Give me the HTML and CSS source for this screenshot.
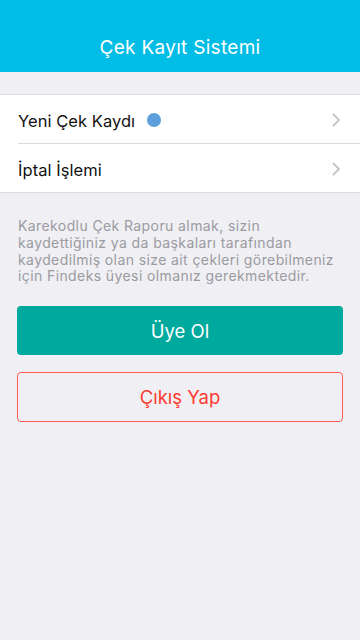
FILE: index.html
```html
<!DOCTYPE html>
<html lang="tr">
<head>
<meta charset="utf-8">
<title>Çek Kayıt Sistemi</title>
<link rel="stylesheet" href="styles.css">
</head>
<body>
<header class="navbar">
  <h1 class="navbar-title">Çek Kayıt Sistemi</h1>
</header>
<main class="content">
  <ul class="menu">
    <li class="menu-row">
      <span class="menu-label">Yeni Çek Kaydı</span>
      <span class="badge-dot"></span>
      <svg class="chevron" viewBox="0 0 9 14" width="9" height="14"><path d="M1.5 1.5 L7 7 L1.5 12.5" fill="none" stroke="#c7c7cc" stroke-width="2" stroke-linecap="round" stroke-linejoin="round"/></svg>
    </li>
    <li class="menu-row">
      <span class="menu-label">İptal İşlemi</span>
      <svg class="chevron" viewBox="0 0 9 14" width="9" height="14"><path d="M1.5 1.5 L7 7 L1.5 12.5" fill="none" stroke="#c7c7cc" stroke-width="2" stroke-linecap="round" stroke-linejoin="round"/></svg>
    </li>
  </ul>
  <p class="info">Karekodlu Çek Raporu almak, sizin kaydettiğiniz ya da başkaları tarafından kaydedilmiş olan size ait çekleri görebilmeniz için Findeks üyesi olmanız gerekmektedir.</p>
  <div class="actions">
    <button class="btn btn-primary">Üye Ol</button>
    <button class="btn btn-outline">Çıkış Yap</button>
  </div>
</main>
</body>
</html>
```
FILE: styles.css
```css
* { box-sizing: border-box; }
html, body {
  margin: 0;
  padding: 0;
  height: 100%;
}
body {
  background: #efeff4;
  font-family: "Inter", "Roboto", "Liberation Sans", sans-serif;
  width: 360px;
  min-height: 640px;
}
.navbar {
  background: #00bde6;
  height: 72px;
  display: flex;
  align-items: flex-end;
  justify-content: center;
  padding-bottom: 13px;
}
.navbar-title {
  margin: 0;
  color: #ffffff;
  font-size: 19px;
  font-weight: 400;
  line-height: 22px;
  letter-spacing: 0.3px;
}
.content {
  padding-top: 22px;
}
.menu {
  list-style: none;
  margin: 0;
  padding: 0 0 0 18px;
  background: #ffffff;
  border-top: 1px solid #dcdce0;
  border-bottom: 1px solid #dcdce0;
}
.menu-row {
  display: flex;
  align-items: center;
  height: 49px;
  padding-right: 19px;
  padding-top: 2px;
  border-bottom: 1px solid #dcdce0;
}
.menu-row:last-child {
  border-bottom: none;
  height: 48px;
}
.menu-label {
  font-size: 16.5px;
  color: #111111;
  letter-spacing: 0.05px;
  padding-top: 2px;
}
.badge-dot {
  width: 14px;
  height: 14px;
  border-radius: 50%;
  background: #5b9fdc;
  margin-left: 12px;
}
.chevron {
  margin-left: auto;
  display: block;
}
.info {
  margin: 25px 16px 0 18px;
  font-size: 14px;
  line-height: 16.8px;
  letter-spacing: 0.4px;
  color: #9b9ba0;
}
.actions {
  display: flex;
  flex-direction: column;
  gap: 17px;
  padding: 21px 17px 0 17px;
}
.btn {
  height: 49px;
  width: 100%;
  border-radius: 4px;
  font-family: inherit;
  font-size: 18.5px;
  font-weight: 400;
  cursor: pointer;
}
.btn-primary {
  background: #00a99d;
  color: #ffffff;
  border: none;
}
.btn-outline {
  background: transparent;
  color: #ff3b30;
  border: 1.5px solid #ff5b52;
  height: 50px;
}
```
